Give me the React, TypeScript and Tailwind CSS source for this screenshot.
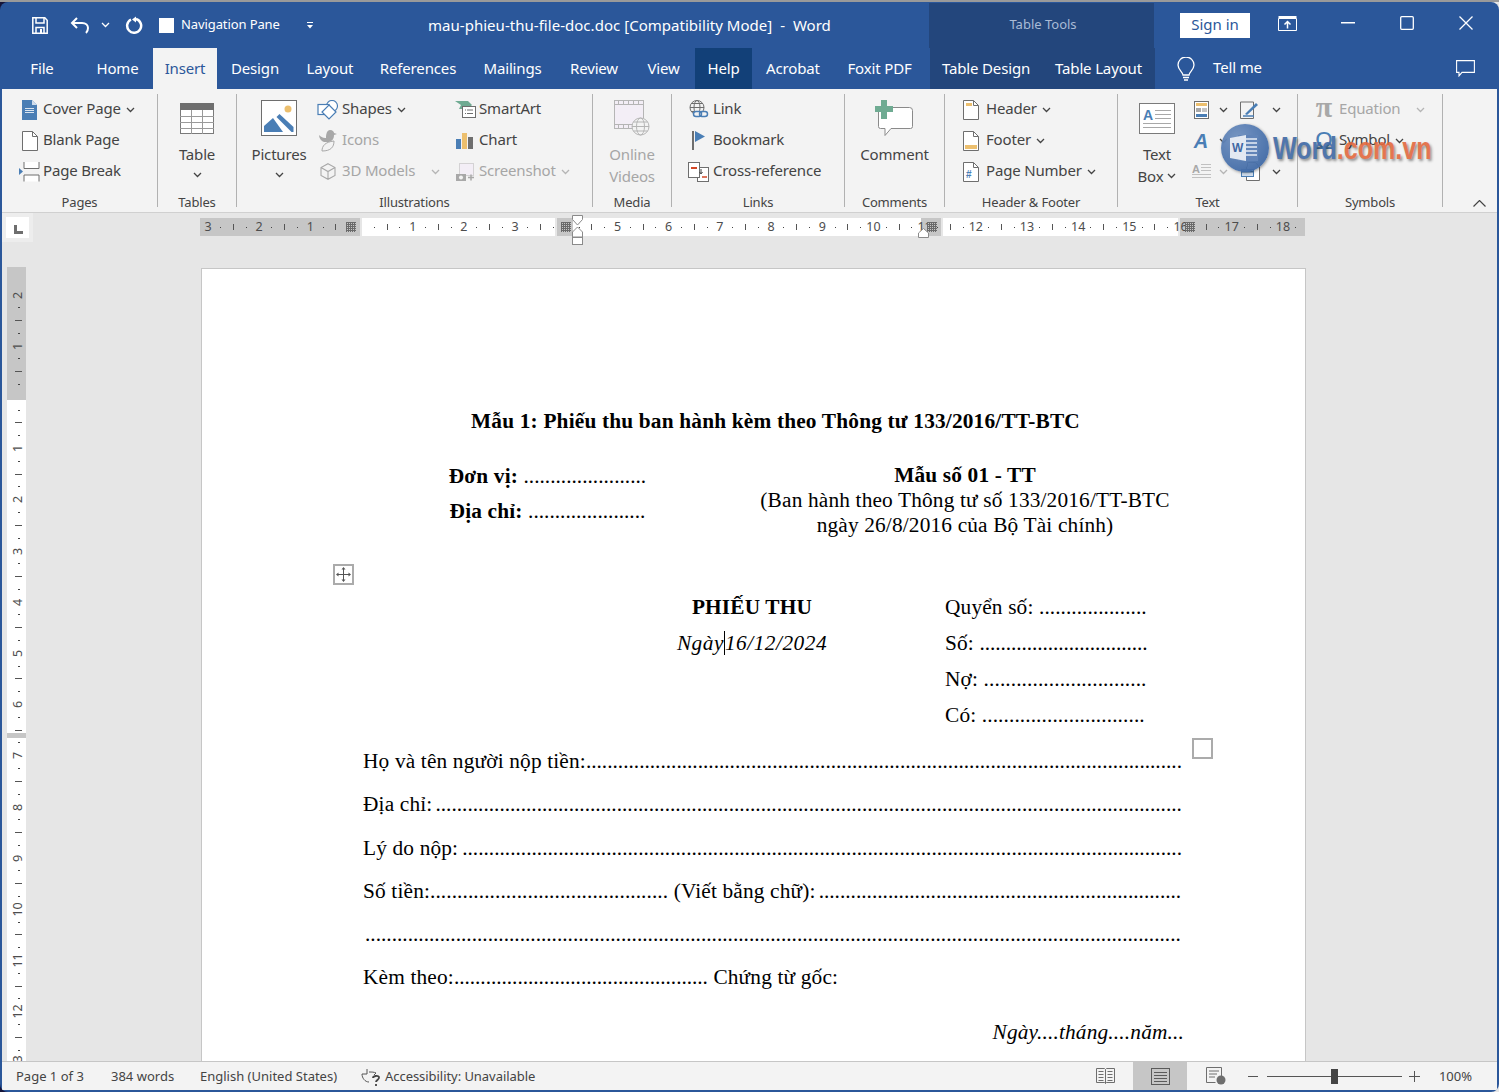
import type { ReactNode } from "react";

const ui = "font-['Noto_Sans','Open_Sans',sans-serif]";
const dots = (n: number) => ".".repeat(n);

function Dots({ n, className = "tracking-normal" }: { n: number; className?: string }) {
  return <span className={`font-normal not-italic ${className}`}>{dots(n)}</span>;
}

function Chev({ className = "text-[#444]" }: { className?: string }) {
  return (
    <svg width="9" height="6" viewBox="0 0 9 6" className={className}>
      <path d="M1 1l3.5 3.5L8 1" fill="none" stroke="currentColor" strokeWidth="1.3" />
    </svg>
  );
}

function SmallBtn({ icon, label, iconW, chevron, off, chevGap, pl = 0 }: {
  icon: ReactNode; label: string; iconW: number; chevron?: boolean; off?: boolean; chevGap?: number; pl?: number;
}) {
  return (
    <div className={`flex h-[31px] items-center ${off ? "text-[#a6a6a6]" : "text-[#444]"}`} style={{ paddingLeft: pl }}>
      <span className="flex shrink-0 items-center justify-center" style={{ width: iconW }}>{icon}</span>
      <span className="-mt-[2px] whitespace-nowrap">{label}</span>
      {chevron && (
        <span className="flex" style={{ marginLeft: chevGap ?? 5 }}>
          <Chev className={off ? "text-[#b5b5b5]" : "text-[#444]"} />
        </span>
      )}
    </div>
  );
}

function LargeBtn({ icon, lines, chevron, off, w }: {
  icon: ReactNode; lines: string[]; chevron?: "below" | "inline"; off?: boolean; w: number;
}) {
  return (
    <div className={`flex shrink-0 flex-col items-center pt-[6px] ${off ? "text-[#a6a6a6]" : "text-[#444]"}`} style={{ width: w }}>
      <div className="flex h-[36px] items-center justify-center">{icon}</div>
      <div className="mt-[7px] flex flex-col items-center leading-[22px]">
        {lines.map((l, i) => (
          <span key={l} className="flex items-center whitespace-nowrap">
            {l}
            {chevron === "inline" && i === lines.length - 1 && <span className="ml-[4px] flex"><Chev /></span>}
          </span>
        ))}
        {chevron === "below" && <span className="flex h-[20px] items-center"><Chev /></span>}
      </div>
    </div>
  );
}

function Group({ w, label, children }: { w: number; label: string; children: ReactNode }) {
  return (
    <div className="flex h-[118px] shrink-0 flex-col" style={{ width: w }}>
      <div className="flex h-[93px]">{children}</div>
      <div className="flex h-[25px] items-center justify-center pt-[6px] text-[13px] text-[#444]">{label}</div>
    </div>
  );
}

function Sep() {
  return <div className="h-[113px] w-px shrink-0 bg-[#b1b1b1]" />;
}

const Doc = ({ children }: { children?: ReactNode }) => (
  <svg width="16" height="20" viewBox="0 0 16 20">
    <path d="M.5.5h10l5 5v14H.5z" fill="#fff" stroke="#6e6e6e" />
    <path d="M10.5.5v5h5" fill="none" stroke="#6e6e6e" />
    {children}
  </svg>
);

function CoverIcon() {
  return (
    <svg width="15" height="20" viewBox="0 0 15 20">
      <path d="M0 0h10l5 5v15H0z" fill="#4a7eb5" />
      <path d="M10 0l5 5h-5z" fill="#cfdded" />
      <path d="M3 8h9v1H3zM3 10h9v1H3zM3 12h9v1H3z" fill="#fff" opacity=".8" />
    </svg>
  );
}

function PageBreakIcon() {
  return (
    <svg width="21" height="20" viewBox="0 0 21 20">
      <path d="M0 6v7l4-3.5z" fill="#4a7eb5" />
      <path d="M5 0v6.5h15V0M5 19.500v-6.500h15v6.500" fill="#fff" stroke="#6e6e6e" />
    </svg>
  );
}

function TableIcon() {
  return (
    <svg width="34" height="31" viewBox="0 0 34 31">
      <rect x=".5" y=".5" width="33" height="30" fill="#fff" stroke="#7a7a7a" />
      <rect width="34" height="7" fill="#6e6e6e" />
      <path d="M0 13.500h34M0 19.500h34M0 25.500h34M11.500 7v24M22.500 7v24" stroke="#9a9a9a" fill="none" />
    </svg>
  );
}

function PicturesIcon() {
  return (
    <svg width="36" height="36" viewBox="0 0 36 36">
      <rect x=".5" y=".5" width="35" height="35" fill="#fff" stroke="#6e6e6e" />
      <circle cx="27" cy="9" r="3.500" fill="#ecbf6e" />
      <path d="M3 32v-6l9-8 10 14z" fill="#4a7eb5" />
      <path d="M15.500 17l3-3 14 13v5h-2z" fill="#4a7eb5" />
    </svg>
  );
}

function ShapesIcon() {
  return (
    <svg width="22" height="20" viewBox="0 0 22 20" fill="#fff" stroke="#4a7eb5" strokeWidth="1.200">
      <circle cx="15" cy="6" r="5.500" />
      <rect x="1" y="4.500" width="11" height="10" />
      <path d="M12 5l7 7-7 7-7-7z" />
    </svg>
  );
}

function IconsIcon() {
  return (
    <svg width="19" height="22" viewBox="0 0 19 22" fill="#a8a8a8">
      <path d="M11 0c3 0 4 2 4 3l3 1-3 1c0 4-2 6-5 7H5C2 11 0 8 0 5c3 3 6 3 7 3 0-4 1-8 4-8z" />
      <path d="M3 21c0-5 3-9 12-10 0 6-3 10-12 10z" fill="#f3f3f3" stroke="#a8a8a8" />
    </svg>
  );
}

function CubeIcon() {
  return (
    <svg width="16" height="17" viewBox="0 0 16 17" fill="none" stroke="#a8a8a8" strokeWidth="1.100">
      <path d="M8 .7l7 3.800v8L8 16.300 1 12.500v-8zM1 4.500l7 4 7-4M8 8.500v7.800" />
    </svg>
  );
}

function SmartArtIcon() {
  return (
    <svg width="21" height="17" viewBox="0 0 21 17">
      <path d="M0 0h13l4 4-4 4H4l2-4z" fill="#6fab92" />
      <rect x="7.500" y="5.500" width="13" height="11" fill="#fff" stroke="#6e6e6e" />
      <path d="M10 9h1M12 9h6M10 12.500h1M12 12.500h6" stroke="#6e6e6e" />
    </svg>
  );
}

function ChartIcon() {
  return (
    <svg width="18" height="16" viewBox="0 0 18 16">
      <rect y="6" width="5" height="10" fill="#4a7eb5" />
      <rect x="6" width="5" height="16" fill="#ecbf6e" />
      <rect x="12" y="4" width="5" height="12" fill="#6e6e6e" />
    </svg>
  );
}

function ScreenshotIcon() {
  return (
    <svg width="19" height="18" viewBox="0 0 19 18">
      <rect x="3.500" y=".5" width="14" height="12" fill="#f3eef6" stroke="#b5b5b5" strokeDasharray="1 1" />
      <rect y="11" width="10" height="7" fill="#a8a8a8" />
      <circle cx="5" cy="14.500" r="2" fill="#f3f3f3" />
      <path d="M12 14.500h6M15 11.500v6" stroke="#a8a8a8" strokeWidth="1.500" />
    </svg>
  );
}

function VideoIcon() {
  return (
    <svg width="36" height="36" viewBox="0 0 36 36" fill="none" stroke="#b5b5b5">
      <rect x=".5" y=".5" width="29" height="28" fill="#f3eef6" />
      <path d="M0 4.500h30M0 24.500h30M4.500 0v4M9.500 0v4M14.500 0v4M19.500 0v4M24.500 0v4M4.500 25v4M9.500 25v4M14.500 25v4M19.500 25v4" />
      <circle cx="26.500" cy="26.500" r="8.500" fill="#f3f3f3" />
      <ellipse cx="26.500" cy="26.500" rx="4" ry="8.500" />
      <path d="M18 26.500h17M19.500 22h14M19.500 31h14" />
    </svg>
  );
}

function LinkIcon() {
  return (
    <svg width="20" height="19" viewBox="0 0 20 19" fill="none">
      <circle cx="8" cy="7.500" r="7" stroke="#6e6e6e" />
      <ellipse cx="8" cy="7.500" rx="3" ry="7" stroke="#6e6e6e" />
      <path d="M1 7.500h14M2 3.500h12M2 11.500h12" stroke="#6e6e6e" />
      <rect x="4.500" y="11.500" width="8" height="5" rx="2.500" stroke="#4a7eb5" strokeWidth="1.500" fill="#f3f3f3" />
      <rect x="10.500" y="11.500" width="8" height="5" rx="2.500" stroke="#4a7eb5" strokeWidth="1.500" fill="none" />
    </svg>
  );
}

function BookmarkIcon() {
  return (
    <svg width="14" height="19" viewBox="0 0 14 19">
      <rect width="2" height="19" fill="#6e6e6e" />
      <path d="M3 0l10 5.500L3 11z" fill="#4a7eb5" />
    </svg>
  );
}

function CrossRefIcon() {
  return (
    <svg width="21" height="20" viewBox="0 0 21 20" fill="none" stroke="#6e6e6e">
      <rect x="9.500" y="5.500" width="11" height="14" fill="#fff" />
      <rect x=".5" y=".5" width="11" height="15" fill="#fff" />
      <path d="M3 6h6" stroke="#d24726" strokeWidth="2" />
      <path d="M14 15h5" stroke="#d24726" strokeWidth="1.500" />
      <path d="M13 7v4M11.500 10l1.500 2 1.500-2" stroke="#444" />
    </svg>
  );
}

function CommentIcon() {
  return (
    <svg width="39" height="37" viewBox="0 0 39 37">
      <path d="M3.500 7.500h31a3 3 0 0 1 3 3v16a2 2 0 0 1-2 2H16l-6 7v-7H5.500a2 2 0 0 1-2-2z" fill="#fff" stroke="#8a8a8a" />
      <path d="M6 0h6v6h6v6h-6v7H6v-7H0V6h6z" fill="#6fab92" />
    </svg>
  );
}

function TextBoxIcon() {
  return (
    <svg width="36" height="31" viewBox="0 0 36 31">
      <rect x=".5" y=".5" width="35" height="30" fill="#fff" stroke="#7a7a7a" />
      <text x="4" y="17" fontSize="14" fontWeight="700" fill="#4a7eb5" fontFamily="Liberation Sans">A</text>
      <path d="M16 7.500h16M16 11.500h16M16 15.500h16M4 20.500h28M4 24.500h28" stroke="#a8a8a8" />
    </svg>
  );
}

function QuickPartsIcon() {
  return (
    <svg width="15" height="18" viewBox="0 0 15 18">
      <rect x=".5" y=".5" width="14" height="17" fill="#fff" stroke="#6e6e6e" />
      <rect x="2" y="2" width="11" height="3" fill="#ecbf6e" />
      <rect x="2" y="7" width="5" height="4" fill="#a8a8a8" />
      <path d="M8 8h5M8 10h5" stroke="#8a8a8a" />
      <rect x="2" y="13" width="11" height="3" fill="#4a7eb5" />
    </svg>
  );
}

function SignatureIcon() {
  return (
    <svg width="20" height="18" viewBox="0 0 20 18" fill="none">
      <path d="M.5 1h13v16.500H.5z" stroke="#6e6e6e" />
      <path d="M3 15h11" stroke="#4a7eb5" strokeWidth="1.500" />
      <path d="M5 13l11-11 2 2L7 14z" fill="#4a7eb5" />
    </svg>
  );
}

function DropCapIcon() {
  return (
    <svg width="19" height="17" viewBox="0 0 19 17">
      <text x="0" y="10" fontSize="11" fontWeight="700" fill="#a8a8a8" fontFamily="Liberation Sans">A</text>
      <path d="M9 1.500h10M9 4.500h10M9 7.500h10M0 11.500h19M0 14.500h19" stroke="#c0c0c0" />
    </svg>
  );
}

function ObjectIcon() {
  return (
    <svg width="19" height="19" viewBox="0 0 19 19" fill="none">
      <path d="M5.500 4.500v14h13V5l-4-4.500h-8v4" fill="#fff" stroke="#6e6e6e" />
      <rect x=".5" y="7.500" width="12" height="7" fill="#cfdded" stroke="#4a7eb5" />
      <path d="M1 9.500h11" stroke="#4a7eb5" strokeWidth="2" />
    </svg>
  );
}

function GridMark({ x }: { x: number }) {
  return (
    <svg width="10" height="10" viewBox="0 0 10 10" className="absolute top-[4px]" style={{ left: x }}>
      <rect width="10" height="10" fill="#c6c6c6" />
      <path d="M0 .5h10M0 2.500h10M0 4.500h10M0 6.500h10M0 8.500h10M.5 0v10M2.500 0v10M4.500 0v10M6.500 0v10M8.500 0v10" stroke="#6a6a6a" />
    </svg>
  );
}

function HRulerCell({ n }: { n: number | null }) {
  return (
    <div className="flex w-[51.2px] shrink-0 items-center text-[12.5px] text-[#4d4d4d]">
      <span className="flex w-[12.8px] justify-center pt-px">{n}</span>
      <span className="flex w-[12.8px] justify-center"><i className="block h-px w-px bg-[#444]" /></span>
      <span className="flex w-[12.8px] justify-center"><i className="block h-[6px] w-px bg-[#555]" /></span>
      <span className="flex w-[12.8px] justify-center"><i className="block h-px w-px bg-[#444]" /></span>
    </div>
  );
}

function VRulerCell({ n }: { n: number | null }) {
  return (
    <div className="flex h-[51.2px] shrink-0 flex-col items-center text-[12.5px] text-[#4d4d4d]">
      <span className="flex h-[12.8px] items-center justify-center"><span className="-rotate-90 whitespace-nowrap">{n}</span></span>
      <span className="flex h-[12.8px] items-center justify-center"><i className="block h-px w-[2px] bg-[#444]" /></span>
      <span className="flex h-[12.8px] items-center justify-center"><i className="block h-px w-[7px] bg-[#555]" /></span>
      <span className="flex h-[12.8px] items-center justify-center"><i className="block h-px w-[2px] bg-[#444]" /></span>
    </div>
  );
}

const tabs: [string, number][] = [
  ["File", 80], ["Home", 71], ["Insert", 64], ["Design", 76], ["Layout", 74], ["References", 102],
  ["Mailings", 87], ["Review", 76], ["View", 63], ["Help", 57], ["Acrobat", 82], ["Foxit PDF", 91],
];

const hNums: (number | null)[] = [3, 2, 1, null, 1, 2, 3, 4, 5, 6, 7, 8, 9, 10, 11, 12, 13, 14, 15, 16, 17, 18];
const vNums: (number | null)[] = [2, 1, null, 1, 2, 3, 4, 5, 6, 7, 8, 9, 10, 11, 12, 13];

function TitleBar() {
  return (
    <div className="flex h-[46px] shrink-0 items-center text-white">
      <svg width="16" height="17" viewBox="0 0 16 17" className="ml-[30px] mr-[2px]" fill="none" stroke="#fff" strokeWidth="1.500">
        <path d="M.8.8h12l2.400 2.400v13H.8z" />
        <path d="M4 1v5h8V1M4 16v-5.500h8V16" />
        <rect x="8" y="12" width="2" height="4" fill="#fff" stroke="none" />
      </svg>
      <svg width="20" height="17" viewBox="0 0 20 17" className="ml-[20px]" fill="none" stroke="#fff" strokeWidth="2">
        <path d="M7 1L2 6l5 5M2 6h10c4 0 6 2.500 6 5s-1 4-2 5" />
      </svg>
      <span className="ml-[10px] flex w-[10px] justify-center"><Chev className="text-white" /></span>
      <svg width="18" height="18" viewBox="0 0 18 18" className="ml-[15px]" fill="none" stroke="#fff" strokeWidth="2.500">
        <path d="M6 3.500a7 7 0 1 0 5-.5" />
        <path d="M11 .5v6l-4-3z" fill="#fff" stroke="none" />
      </svg>
      <span className="ml-[16px] h-[15px] w-[15px] bg-white" />
      <span className="ml-[7px] w-[100px] whitespace-nowrap text-[13px] tracking-[-0.1px]">Navigation Pane</span>
      <svg width="8" height="7" viewBox="0 0 8 7" className="ml-[25px]" fill="#fff">
        <rect x="1" width="6" height="1" />
        <path d="M1 3h6L4 6.500z" />
      </svg>
      <span className="ml-[114px] whitespace-pre text-[15px] tracking-[0.03px]">mau-phieu-thu-file-doc.doc [Compatibility Mode]  -  Word</span>
      <div className="flex-1" />
      <div className="mt-px flex h-[45px] w-[225px] items-center justify-center bg-[#23467c] pb-px pl-[3px] text-[13px] text-[#a9bbd6]">
        Table Tools
      </div>
      <div className="ml-[26px] flex h-[25px] w-[70px] items-center justify-center bg-white pb-px text-[15px] text-[#2b579a]">Sign in</div>
      <svg width="19" height="15" viewBox="0 0 19 15" className="mb-[4px] ml-[28px]" fill="none" stroke="#fff">
        <path d="M.5 2.500h18v12H.5z" strokeWidth="1" />
        <path d="M.5 1h18" strokeWidth="2" />
        <path d="M9.500 12.500V6M6.500 8.500l3-3 3 3" strokeWidth="1.500" />
      </svg>
      <svg width="14" height="2" viewBox="0 0 14 2" className="mb-[4px] ml-[44px]"><rect width="14" height="1.500" fill="#fff" /></svg>
      <svg width="14" height="14" viewBox="0 0 14 14" className="mb-[4px] ml-[45px]" fill="none" stroke="#fff" strokeWidth="1.300"><rect x=".7" y=".7" width="12.600" height="12.600" rx="1" /></svg>
      <svg width="14" height="14" viewBox="0 0 14 14" className="mb-[4px] ml-[45px] mr-[24px]" fill="none" stroke="#fff" strokeWidth="1.300"><path d="M.5.5l13 13M13.500.5l-13 13" /></svg>
    </div>
  );
}

function TabRow() {
  return (
    <div className="flex h-[41px] shrink-0 items-center text-[15px] tracking-[-0.15px] text-white">
      {tabs.map(([t, w]) => (
        <div
          key={t}
          className={`flex h-full items-center justify-center ${t === "Insert" ? "bg-[#f3f3f3] text-[#2b579a]" : ""} ${t === "Help" ? "bg-[#124078]" : ""}`}
          style={{ width: w }}
        >
          {t}
        </div>
      ))}
      <div className="ml-[5px] flex h-full w-[225px] items-center bg-[#23467c]">
        <span className="flex w-[112px] justify-center">Table Design</span>
        <span className="flex w-[113px] justify-center">Table Layout</span>
      </div>
      <svg width="18" height="24" viewBox="0 0 18 24" className="ml-[22px]" fill="none" stroke="#fff" strokeWidth="1.300">
        <path d="M6 18c0-3-5-5-5-10a8 8 0 0 1 16 0c0 5-5 7-5 10z" />
        <path d="M6 20.500h6M7 23h4" />
      </svg>
      <span className="ml-[18px] pb-[2px]">Tell me</span>
      <svg width="19" height="17" viewBox="0 0 19 17" className="ml-[194px]" fill="none" stroke="#fff" strokeWidth="1.100">
        <path d="M.6.6h17.800v11.800H6l-3 3.500v-3.500H.6z" />
      </svg>
    </div>
  );
}

function Ribbon() {
  return (
    <div className="flex h-[124px] shrink-0 border-b border-[#d0d0d0] bg-[#f3f3f3] pt-[5px] text-[15px] tracking-[-0.18px]">
      <Group w={155} label="Pages">
        <div className="flex flex-col">
          <SmallBtn pl={14} iconW={27} icon={<CoverIcon />} label="Cover Page" chevron />
          <SmallBtn pl={14} iconW={27} icon={<Doc />} label="Blank Page" />
          <SmallBtn pl={14} iconW={27} icon={<PageBreakIcon />} label="Page Break" />
        </div>
      </Group>
      <Sep />
      <Group w={78} label="Tables">
        <LargeBtn w={78} icon={<TableIcon />} lines={["Table"]} chevron="below" />
      </Group>
      <Sep />
      <Group w={355} label="Illustrations">
        <div className="ml-[7px]"><LargeBtn w={70} icon={<PicturesIcon />} lines={["Pictures"]} chevron="below" /></div>
        <div className="flex w-[137px] flex-col">
          <SmallBtn iconW={28} icon={<ShapesIcon />} label="Shapes" chevron />
          <SmallBtn iconW={28} icon={<IconsIcon />} label="Icons" off />
          <SmallBtn iconW={28} icon={<CubeIcon />} label="3D Models" chevron off chevGap={16} />
        </div>
        <div className="flex flex-col">
          <SmallBtn iconW={28} icon={<SmartArtIcon />} label="SmartArt" />
          <SmallBtn iconW={28} icon={<ChartIcon />} label="Chart" />
          <SmallBtn iconW={28} icon={<ScreenshotIcon />} label="Screenshot" chevron off />
        </div>
      </Group>
      <Sep />
      <Group w={78} label="Media">
        <LargeBtn w={78} icon={<VideoIcon />} lines={["Online", "Videos"]} off />
      </Group>
      <Sep />
      <Group w={172} label="Links">
        <div className="flex flex-col">
          <SmallBtn pl={12} iconW={29} icon={<LinkIcon />} label="Link" />
          <SmallBtn pl={12} iconW={29} icon={<BookmarkIcon />} label="Bookmark" />
          <SmallBtn pl={12} iconW={29} icon={<CrossRefIcon />} label="Cross-reference" />
        </div>
      </Group>
      <Sep />
      <Group w={99} label="Comments">
        <LargeBtn w={99} icon={<CommentIcon />} lines={["Comment"]} />
      </Group>
      <Sep />
      <Group w={172} label="Header &amp; Footer">
        <div className="flex flex-col">
          <SmallBtn pl={10} iconW={31} icon={<Doc><rect x="3" y="3" width="6" height="3" fill="#ecbf6e" /></Doc>} label="Header" chevron />
          <SmallBtn pl={10} iconW={31} icon={<Doc><rect x="2" y="14" width="12" height="4" fill="#ecbf6e" /></Doc>} label="Footer" chevron />
          <SmallBtn pl={10} iconW={31} icon={<Doc><text x="3" y="16" fontSize="10" fontWeight="700" fill="#4a7eb5" fontFamily="Liberation Sans">#</text></Doc>} label="Page Number" chevron />
        </div>
      </Group>
      <Sep />
      <Group w={179} label="Text">
        <div className="mr-[-6px]"><LargeBtn w={78} icon={<TextBoxIcon />} lines={["Text", "Box"]} chevron="inline" /></div>
        <div className="grid h-[93px] grid-cols-[22px_22px_32px_20px] grid-rows-[31px_31px_31px] items-center justify-items-center">
          <QuickPartsIcon />
          <Chev />
          <SignatureIcon />
          <Chev />
          <span className="font-['Liberation_Sans',sans-serif] text-[20px] font-bold italic leading-none text-[#4a7eb5]">A</span>
          <Chev />
          <span />
          <span />
          <DropCapIcon />
          <Chev className="text-[#b5b5b5]" />
          <ObjectIcon />
          <Chev />
        </div>
      </Group>
      <Sep />
      <Group w={144} label="Symbols">
        <div className="flex flex-col">
          <SmallBtn
            pl={11}
            iconW={30}
            icon={<span className="-mt-[6px] font-['Liberation_Serif',serif] text-[30px] font-bold leading-none text-[#a8a8a8]">π</span>}
            label="Equation"
            chevron
            off
            chevGap={16}
          />
          <SmallBtn
            pl={11}
            iconW={30}
            icon={<span className="font-['Liberation_Sans',sans-serif] text-[24px] leading-none text-[#4a7eb5]">Ω</span>}
            label="Symbol"
            chevron
          />
        </div>
      </Group>
      <Sep />
      <div className="flex h-[113px] flex-1 items-end justify-end pr-[11px]">
        <svg width="13" height="7" viewBox="0 0 13 7" fill="none" stroke="#444" strokeWidth="1.200"><path d="M.5 6.500l6-6 6 6" /></svg>
      </div>
    </div>
  );
}

function Watermark() {
  return (
    <div className="pointer-events-none absolute left-[1221px] top-[124px] flex items-center">
      <div className="relative flex h-[48px] w-[48px] items-center justify-center rounded-full bg-[radial-gradient(circle_at_35%_30%,#7091c0,#335f9f)] opacity-95 shadow-[1px_1px_3px_rgba(0,0,0,0.4)]">
        <svg width="30" height="32" viewBox="0 0 30 32">
          <rect x="8" y="3" width="20" height="26" fill="#5a7fb5" />
          <path d="M13 7h14M13 11h14M16 15h11M16 19h11M16 23h11" stroke="#e8eef6" strokeWidth="1.500" />
          <path d="M0 6l16-3v26L0 26z" fill="#e3e9f2" />
          <text x="2" y="20" fontSize="12" fontWeight="700" fill="#35609f" fontFamily="Liberation Sans">W</text>
        </svg>
      </div>
      <div className="ml-[4px] w-[159px] origin-left scale-x-[0.785] whitespace-nowrap font-['Liberation_Sans',sans-serif] text-[32px] font-bold leading-none opacity-90 [text-shadow:2px_2px_3px_rgba(0,0,0,0.45)]">
        <span className="text-[#3f69a5]">Word</span>
        <span className="text-[#e3693f]">.com.vn</span>
      </div>
    </div>
  );
}

function Rows() {
  const rows: ReactNode[] = [
    <>Họ và tên người nộp tiền:<Dots n={112} className="tracking-[-0.01px]" /></>,
    <>Địa chỉ:<span className="ml-[3px]"><Dots n={140} /></span></>,
    <>Lý do nộp:<span className="ml-[4px]"><Dots n={135} /></span></>,
    <>Số tiền:<Dots n={44} className="tracking-[0.08px]" /> (Viết bằng chữ):<span className="ml-[3px]"><Dots n={68} /></span></>,
    <span className="pl-[2px]"><Dots n={153} /></span>,
    <>Kèm theo:<Dots n={48} className="tracking-[-0.04px]" /> Chứng từ gốc:</>,
  ];
  return (
    <div className="mt-[7px]">
      {rows.map((r, i) => (
        <div key={i} className="h-[43.25px] overflow-hidden whitespace-nowrap leading-[43.25px]">{r}</div>
      ))}
    </div>
  );
}

function Page() {
  return (
    <div className="relative ml-[175px] mt-px h-[900px] w-[1105px] shrink-0 border border-[#c6c6c6] bg-white pl-[161px] pr-[121px] pt-[140px] font-['Liberation_Serif',serif] text-[21.330px] leading-[25px] tracking-[0.16px] text-black">
      <div className="absolute left-[131px] top-[295px] flex h-[21px] w-[21px] items-center justify-center border-2 border-[#ababab] bg-white">
        <svg width="15" height="15" viewBox="0 0 15 15" fill="none" stroke="#555">
          <path d="M7.500 1v13M1 7.500h13" />
          <path d="M7.500 0l2 2.500h-4zM7.500 15l2-2.500h-4zM0 7.500l2.500-2v4zM15 7.500l-2.500-2v4z" fill="#555" stroke="none" />
        </svg>
      </div>
      <div className="absolute left-[990px] top-[469px] h-[21px] w-[21px] border-2 border-[#ababab] bg-white" />

      <div className="pl-[4px] text-center font-bold tracking-[0.18px]">Mẫu 1: Phiếu thu ban hành kèm theo Thông tư 133/2016/TT-BTC</div>

      <div className="mt-[29px] flex">
        <div className="w-[369px] pt-px text-center font-bold">
          <div className="h-[35px]">Đơn vị: <Dots n={23} /></div>
          <div>Địa chỉ: <Dots n={22} /></div>
        </div>
        <div className="ml-[16px] w-[434px] text-center">
          <div className="font-bold">Mẫu số 01 - TT</div>
          <div className="whitespace-nowrap">(Ban hành theo Thông tư số 133/2016/TT-BTC</div>
          <div className="whitespace-nowrap">ngày 26/8/2016 của Bộ Tài chính)</div>
        </div>
      </div>

      <div className="mt-[51px] flex leading-[36px]">
        <div className="ml-[196px] w-[386px] text-center">
          <div className="font-bold">PHIẾU THU</div>
          <div className="italic tracking-[0.5px]">Ngày<span className="border-l border-black" />16/12/2024</div>
        </div>
        <div className="whitespace-nowrap">
          <div>Quyển số: <Dots n={20} className="tracking-[0.05px]" /></div>
          <div>Số: <Dots n={32} className="tracking-[-0.08px]" /></div>
          <div>Nợ: <Dots n={30} className="tracking-[0.1px]" /></div>
          <div>Có: <Dots n={30} className="tracking-[0.1px]" /></div>
        </div>
      </div>

      <Rows />

      <div className="mt-[20px] text-right italic">Ngày....tháng....năm...</div>
    </div>
  );
}

function DocArea() {
  return (
    <div className="flex min-h-0 flex-1 flex-col overflow-hidden bg-[#e6e6e6]">
      <div className="flex h-[54px] shrink-0">
        <div className="h-[29px] w-[31px] bg-[#ededed] p-[4px]">
          <div className="flex h-full w-full items-center justify-center bg-white pl-px pt-[4px]">
            <svg width="9" height="9" viewBox="0 0 9 9"><path d="M0 0h3v6h6v3H0z" fill="#6e6e6e" /></svg>
          </div>
        </div>
        <div className="relative ml-[167px] mt-[5px] h-[18px] w-[1105px]">
          <div className="flex h-full">
            <div className="w-[160px] bg-[#c6c6c6]" />
            <div className="ml-[2px] w-[193px] bg-white" />
            <div className="ml-[2px] w-[16px] bg-[#c6c6c6]" />
            <div className="w-[348px] bg-white" />
            <div className="w-[20px] bg-[#c6c6c6]" />
            <div className="ml-[2px] w-[235px] bg-white" />
            <div className="ml-[2px] w-[125px] bg-[#c6c6c6]" />
          </div>
          <div className={`absolute inset-0 flex overflow-hidden pl-[1.600px] ${ui}`}>
            {hNums.map((n, i) => <HRulerCell key={i} n={n} />)}
          </div>
          <GridMark x={146} />
          <GridMark x={361} />
          <GridMark x={727} />
          <GridMark x={985} />
          <svg width="11" height="30" viewBox="0 0 11 30" className="absolute left-[372px] top-[-3px]" fill="#fff" stroke="#8a8a8a">
            <path d="M.5.500h10v4L5.500 10 .5 4.500z" />
            <path d="M5.500 12l5 5v5H.5v-5z" />
            <rect x=".5" y="22.500" width="10" height="7" />
          </svg>
          <svg width="11" height="10" viewBox="0 0 11 10" className="absolute left-[718px] top-[10px]" fill="#fff" stroke="#8a8a8a">
            <path d="M5.500.5l5 4.500v4.500H.5V5z" />
          </svg>
        </div>
      </div>
      <div className="flex min-h-0 flex-1">
        <div className="relative ml-[5px] h-full w-[19px] shrink-0 overflow-hidden">
          <div className="flex h-full flex-col">
            <div className="h-[133px] bg-[#c6c6c6]" />
            <div className="h-[333px] bg-white" />
            <div className="h-[5px] bg-[#c6c6c6]" />
            <div className="flex-1 bg-white" />
          </div>
          <div className={`absolute inset-0 flex flex-col items-center overflow-hidden pl-[4px] pt-[21.600px] ${ui}`}>
            {vNums.map((n, i) => <VRulerCell key={i} n={n} />)}
          </div>
        </div>
        <Page />
      </div>
    </div>
  );
}

function StatusBar() {
  return (
    <div className="flex h-[29px] shrink-0 items-center border-t border-[#c6c6c6] bg-[#f3f3f3] text-[13px] text-[#444]">
      <span className="ml-[14px] w-[95px] pt-px">Page 1 of 3</span>
      <span className="w-[89px] pt-px">384 words</span>
      <span className="w-[161px] pt-px">English (United States)</span>
      <svg width="20" height="19" viewBox="0 0 20 19" fill="none" stroke="#555" className="mr-[4px]">
        <path d="M6 2v5H1c0 4 3 8 7 8" />
        <path d="M8 5c3 0 5 0 7 1l-2 2" />
        <path d="M12 11c0-2 5-3 6-1s-3 3-3 5M15 17v2" strokeWidth="1.800" stroke="#444" />
      </svg>
      <span className="pt-px tracking-[-0.05px]">Accessibility: Unavailable</span>
      <div className="flex-1" />
      <svg width="19" height="17" viewBox="0 0 19 17" fill="none" stroke="#6e6e6e" className="mr-[18px]">
        <path d="M.5.5h8l1 1 1-1h8v14h-8l-1 1-1-1h-8zM9.500 1.500v14M2.500 3.500h5M2.500 6.500h5M2.500 9.500h5M2.500 12.500h5M11.500 3.500h5M11.500 6.500h5M11.500 9.500h5M11.500 12.500h5" />
      </svg>
      <div className="flex h-full w-[54px] items-center justify-center bg-[#c6c6c6]">
        <svg width="19" height="17" viewBox="0 0 19 17" fill="none" stroke="#5a5a5a"><rect x=".5" y=".5" width="18" height="16" /><path d="M3 4.500h13M3 7.500h13M3 10.500h13M3 13.500h13" /></svg>
      </div>
      <svg width="20" height="18" viewBox="0 0 20 18" fill="none" stroke="#6e6e6e" className="ml-[19px]">
        <path d="M.5.5h15v11M.5.500v15h9M3 4h10M3 7h8M3 10h6" />
        <circle cx="15" cy="13" r="4.500" fill="#6e6e6e" stroke="none" />
      </svg>
      <span className="ml-[22px] h-px w-[10px] bg-[#555]" />
      <div className="ml-[9px] flex h-[13px] w-[135px] items-center">
        <span className="h-px w-[64px] bg-[#555]" />
        <span className="h-[15px] w-[7px] bg-[#444]" />
        <span className="h-px flex-1 bg-[#555]" />
      </div>
      <svg width="11" height="11" viewBox="0 0 11 11" stroke="#555" className="ml-[7px]"><path d="M0 5.500h11M5.500 0v11" /></svg>
      <span className="ml-[18px] mr-[25px] w-[34px] pt-px text-right">100%</span>
    </div>
  );
}

export default function App() {
  return (
    <div className="relative flex h-[1092px] w-[1499px] flex-col overflow-hidden bg-[linear-gradient(90deg,#15153a_50%,#e6e6e6_50%)]">
      <div className="h-[2px] shrink-0 bg-[#9a9a9a]" />
      <div className={`flex min-h-0 flex-1 flex-col overflow-hidden rounded-[8px] bg-[#2b579a] px-[2px] pb-[2px] ${ui}`}>
        <TitleBar />
        <TabRow />
        <Ribbon />
        <DocArea />
        <StatusBar />
      </div>
      <div className={ui}><Watermark /></div>
    </div>
  );
}
